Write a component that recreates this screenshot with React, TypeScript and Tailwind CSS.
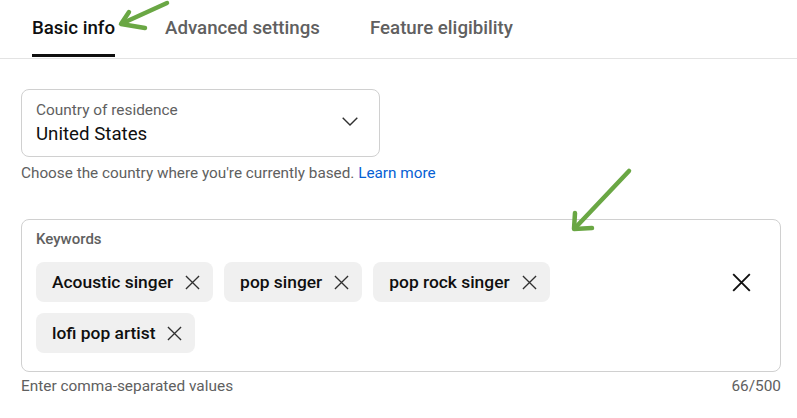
import React from "react";

const XIcon = ({ size = 16, stroke = 1.6, color = "#0f0f0f" }: { size?: number; stroke?: number; color?: string }) => (
  <svg width={size} height={size} viewBox="0 0 16 16" fill="none">
    <path d="M1 1L15 15M15 1L1 15" stroke={color} strokeWidth={stroke} strokeLinecap="butt" />
  </svg>
);

const Chip = ({ label }: { label: string }) => (
  <div className="flex h-[40px] items-center rounded-[8px] bg-[#f0f0f0] pl-[16px] pr-[13px]">
    <span className="text-[17.4px] font-medium leading-[20px] text-[#0f0f0f]">{label}</span>
    <span className="ml-[12px] flex items-center">
      <XIcon size={15} stroke={1.4} color="#303030" />
    </span>
  </div>
);

export default function App() {
  return (
    <div
      className="relative h-[418px] w-[797px] overflow-hidden bg-white"
      style={{ fontFamily: "Roboto, 'Noto Sans', Arial, sans-serif" }}
    >
      {/* Tabs */}
      <div className="flex h-[59px] gap-[50px] border-b border-[#e3e3e3] pl-[32px]">
        <div className="flex h-full flex-col">
          <span className="pt-[16px] text-[18.7px] font-medium leading-[24px] text-[#0f0f0f]">Basic info</span>
          <div className="mb-[1px] mt-auto h-[3px] bg-[#0f0f0f]" />
        </div>
        <div className="flex h-full flex-col">
          <span className="pt-[16px] text-[18.7px] font-medium leading-[24px] text-[#606060]">Advanced settings</span>
        </div>
        <div className="flex h-full flex-col">
          <span className="pt-[16px] text-[18.7px] font-medium leading-[24px] text-[#606060]">Feature eligibility</span>
        </div>
      </div>

      <div className="pl-[21px] pr-[16px]">
        {/* Country */}
        <div className="mt-[30px] flex h-[68px] w-[359px] items-center rounded-[8px] border border-[#d0d0d0] pl-[14px] pr-[21px]">
          <div className="flex flex-1 flex-col pt-[1px]">
            <span className="text-[15.4px] leading-[16px] text-[#606060]">Country of residence</span>
            <span className="mt-[4px] text-[18.7px] leading-[24px] text-[#0f0f0f]">United States</span>
          </div>
          <svg width="16" height="9" viewBox="0 0 16 9" fill="none" className="mt-[-4px]">
            <path d="M0.7 0.7L8 8L15.3 0.7" stroke="#303030" strokeWidth="1.4" />
          </svg>
        </div>
        <p className="mt-[6px] text-[15.3px] leading-[20px] text-[#606060]">
          Choose the country where you're currently based. <span className="text-[#065fd4]">Learn more</span>
        </p>

        {/* Keywords */}
        <div className="mt-[36px] h-[153px] w-[760px] rounded-[8px] border border-[#d0d0d0] pl-[14px] pr-[19px] pt-[11px]">
          <div className="text-[15px] font-medium leading-[16px] text-[#606060]">Keywords</div>
          <div className="mt-[15px] flex items-start">
            <div className="flex flex-1 flex-wrap gap-x-[11px] gap-y-[11px]">
              <Chip label="Acoustic singer" />
              <Chip label="pop singer" />
              <Chip label="pop rock singer" />
              <Chip label="lofi pop artist" />
            </div>
            <div className="ml-[10px] flex h-[40px] w-[40px] items-center justify-center">
              <XIcon size={19} stroke={1.6} color="#0f0f0f" />
            </div>
          </div>
        </div>
        <div className="mt-[4px] flex w-[760px] justify-between text-[15.4px] leading-[20px] text-[#606060]">
          <span>Enter comma-separated values</span>
          <span>66/500</span>
        </div>
      </div>

      {/* Annotation arrows */}
      <svg className="pointer-events-none absolute left-0 top-0" width="797" height="418" viewBox="0 0 797 418" fill="none">
        <g stroke="#6aa744" strokeWidth="4.5" strokeLinecap="round" strokeLinejoin="round">
          <path d="M167 3L123 23" />
          <path d="M129 12L121 24L145 28" />
          <path d="M629 171L576 227" />
          <path d="M575 213L574 229L592 228" />
        </g>
      </svg>
    </div>
  );
}
